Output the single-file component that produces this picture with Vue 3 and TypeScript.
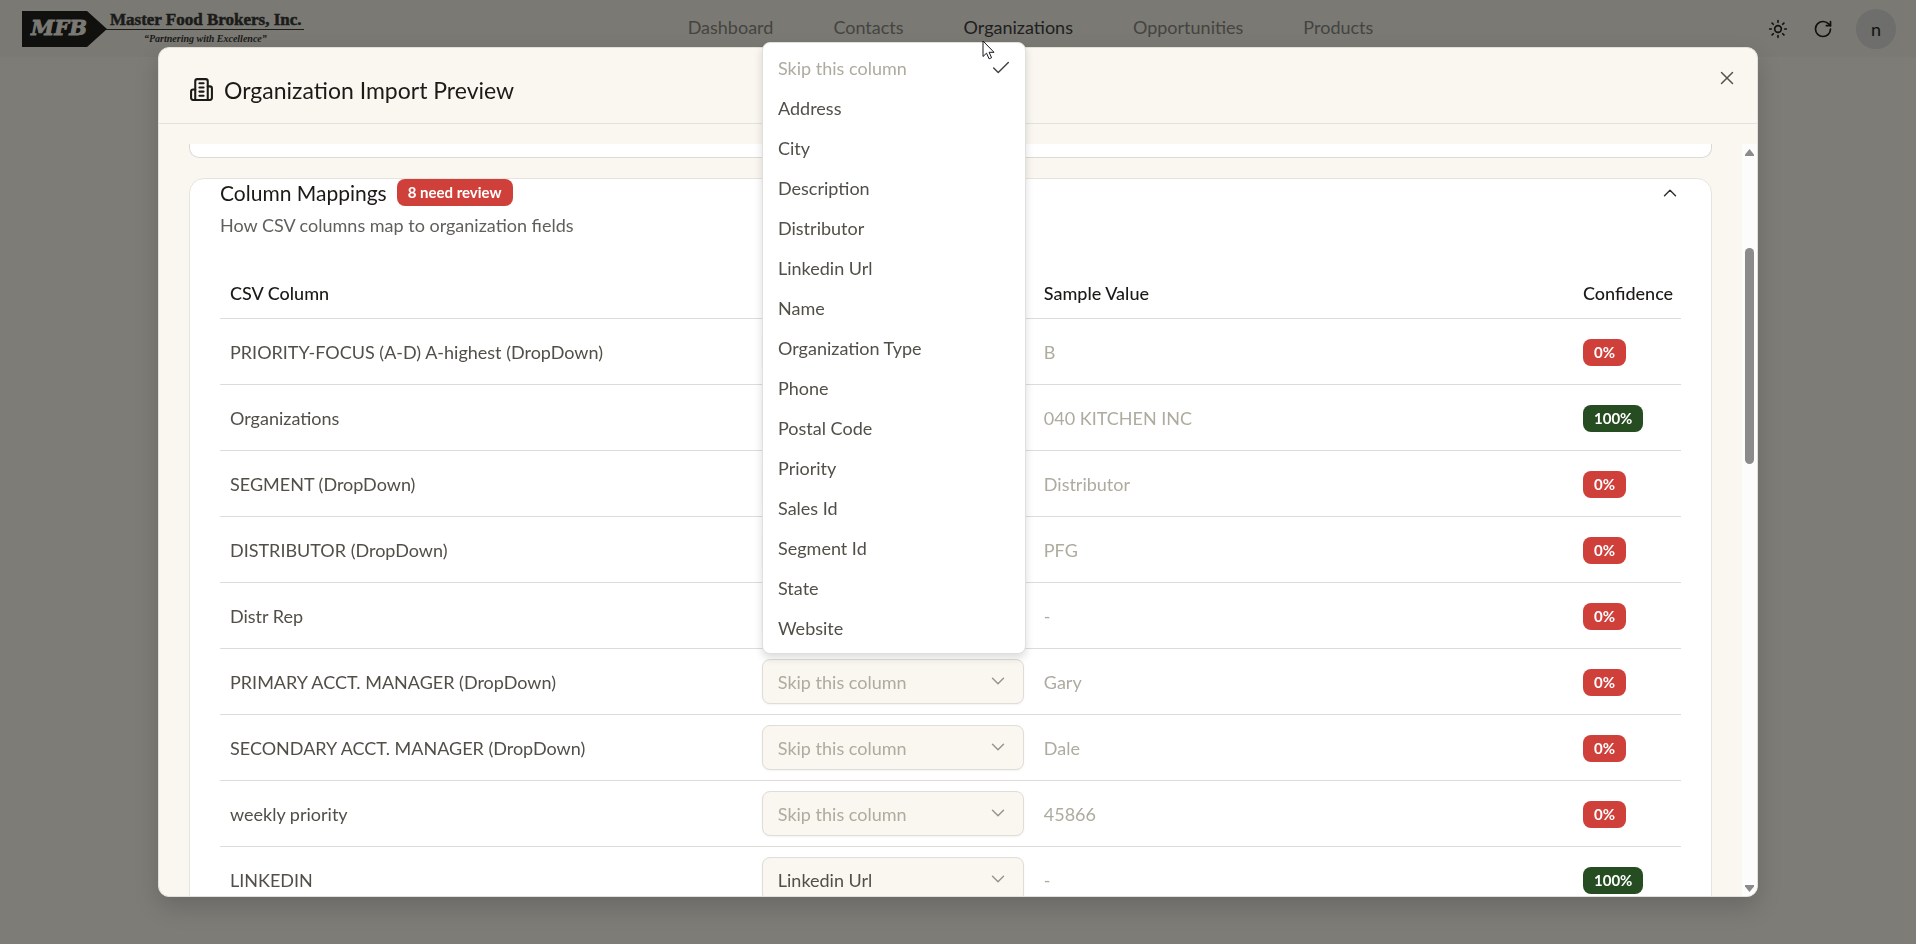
<script setup lang="ts">
import { ref } from 'vue'

interface Mapping {
  column: string
  field: string
  sample: string
  confidence: number
}

const SKIP = 'Skip this column'

const navItems = ['Dashboard', 'Contacts', 'Organizations', 'Opportunities', 'Products']

const fieldOptions = [
  SKIP, 'Address', 'City', 'Description', 'Distributor', 'Linkedin Url', 'Name', 'Organization Type',
  'Phone', 'Postal Code', 'Priority', 'Sales Id', 'Segment Id', 'State', 'Website',
]

const selected = ref(SKIP)

const mappings = ref<Mapping[]>([
  { column: 'PRIORITY-FOCUS (A-D) A-highest (DropDown)', field: SKIP, sample: 'B', confidence: 0 },
  { column: 'Organizations', field: 'Name', sample: '040 KITCHEN INC', confidence: 100 },
  { column: 'SEGMENT (DropDown)', field: SKIP, sample: 'Distributor', confidence: 0 },
  { column: 'DISTRIBUTOR (DropDown)', field: SKIP, sample: 'PFG', confidence: 0 },
  { column: 'Distr Rep', field: SKIP, sample: '-', confidence: 0 },
  { column: 'PRIMARY ACCT. MANAGER (DropDown)', field: SKIP, sample: 'Gary', confidence: 0 },
  { column: 'SECONDARY ACCT. MANAGER (DropDown)', field: SKIP, sample: 'Dale', confidence: 0 },
  { column: 'weekly priority', field: SKIP, sample: '45866', confidence: 0 },
  { column: 'LINKEDIN', field: 'Linkedin Url', sample: '-', confidence: 100 },
])
</script>

<template>
  <div class="page">
    <header class="topbar">
      <a href="#" class="brand" aria-label="Master Food Brokers, Inc.">
        <svg class="logo" viewBox="0 0 285 40" aria-hidden="true">
          <path d="M2 2h65l20 18-20 18H2Z" fill="#10100e" />
          <path d="M86 20.500H284" stroke="#1b1b19" stroke-width="1" />
          <text x="11" y="26" class="logo-mark">MFB</text>
          <text x="90" y="16" class="logo-name">Master Food Brokers, Inc.</text>
          <text x="124" y="33" class="logo-tag">“Partnering with Excellence”</text>
        </svg>
      </a>
      <nav class="nav">
        <a v-for="item in navItems" :key="item" href="#" class="nav-link" :class="{ active: item === 'Organizations' }">{{ item }}</a>
      </nav>
      <div class="tools">
        <button type="button" class="tool" aria-label="Toggle theme">
          <svg viewBox="0 0 24 24" class="icon small">
            <circle cx="12" cy="12" r="4" />
            <path d="M12 2v2M12 20v2M4.930 4.930l1.410 1.410M17.660 17.660l1.410 1.410M2 12h2M20 12h2M6.340 17.660l-1.410 1.410M19.070 4.930l-1.410 1.410" />
          </svg>
        </button>
        <button type="button" class="tool" aria-label="Refresh">
          <svg viewBox="0 0 24 24" class="icon small">
            <path d="M21 12a9 9 0 1 1-9-9c2.520 0 4.930 1 6.740 2.740L21 8" />
            <path d="M21 3v5h-5" />
          </svg>
        </button>
        <button type="button" class="avatar">n</button>
      </div>
    </header>

    <section class="dialog" role="dialog" aria-labelledby="dialog-title">
      <div class="dialog-inner">
        <div class="dialog-head">
          <svg viewBox="0 0 24 24" class="icon building">
            <path d="M6 22V4a2 2 0 0 1 2-2h8a2 2 0 0 1 2 2v18Z" />
            <path d="M6 12H4a2 2 0 0 0-2 2v6a2 2 0 0 0 2 2h2" />
            <path d="M18 9h2a2 2 0 0 1 2 2v9a2 2 0 0 1-2 2h-2" />
            <path d="M10 6h4M10 10h4M10 14h4M10 18h4" />
          </svg>
          <h1 id="dialog-title">Organization Import Preview</h1>
          <button type="button" class="close" aria-label="Close">
            <svg viewBox="0 0 24 24" class="icon"><path d="M18 6 6 18M6 6l12 12" /></svg>
          </button>
        </div>

        <div class="dialog-body">
          <div class="scroll">
            <div class="card card-tail"></div>
            <div class="card mappings">
              <div class="card-head">
                <h2>Column Mappings</h2>
                <span class="badge danger">8 need review</span>
                <button type="button" class="collapse" aria-label="Collapse column mappings">
                  <svg viewBox="0 0 24 24" class="icon"><path d="m18 15-6-6-6 6" /></svg>
                </button>
              </div>
              <p class="hint">How CSV columns map to organization fields</p>
              <table>
                <colgroup>
                  <col class="col-source" />
                  <col class="col-field" />
                  <col />
                  <col class="col-confidence" />
                </colgroup>
                <thead>
                  <tr>
                    <th scope="col">CSV Column</th>
                    <td></td>
                    <th scope="col">Sample Value</th>
                    <th scope="col">Confidence</th>
                  </tr>
                </thead>
                <tbody>
                  <tr v-for="row in mappings" :key="row.column">
                    <td>{{ row.column }}</td>
                    <td>
                      <div class="select-wrap">
                        <select v-model="row.field" :aria-label="row.column" :class="{ placeholder: row.field === SKIP }">
                          <option v-for="option in fieldOptions" :key="option">{{ option }}</option>
                        </select>
                        <svg viewBox="0 0 24 24" class="icon chevron"><path d="m6 9 6 6 6-6" /></svg>
                      </div>
                    </td>
                    <td class="sample">{{ row.sample }}</td>
                    <td>
                      <span class="badge" :class="row.confidence === 100 ? 'success' : 'danger'">{{ row.confidence }}%</span>
                    </td>
                  </tr>
                </tbody>
              </table>
            </div>
          </div>
          <div class="scrollbar" aria-hidden="true">
            <svg viewBox="0 0 9 7" class="arrow"><path d="M4.500 0 9 5.500V7H0V5.500Z" /></svg>
            <div class="track"><div class="thumb"></div></div>
            <svg viewBox="0 0 9 7" class="arrow"><path d="M4.500 7 9 1.500V0H0V1.500Z" /></svg>
          </div>
        </div>
      </div>

      <div class="menu" role="listbox" aria-label="Organization fields">
        <button
          v-for="option in fieldOptions"
          :key="option"
          type="button"
          role="option"
          class="option"
          :class="{ placeholder: option === SKIP }"
          :aria-selected="option === selected"
          @click="selected = option"
        >
          {{ option }}
          <svg v-if="option === selected" viewBox="0 0 24 24" class="icon check"><path d="M20 6 9 17l-5-5" /></svg>
        </button>
      </div>
      <svg class="cursor" viewBox="0 0 13 20" aria-hidden="true">
        <path d="M1 1v15.500l3.500-3.300 2.600 5.600 2.500-1.100-2.500-5.400h4.900Z" />
      </svg>
    </section>
  </div>
</template>

<style>
body {
  margin: 0;
}
</style>

<style scoped>
* {
  box-sizing: border-box;
}

.page {
  height: 100vh;
  overflow: hidden;
  background: #7d7c77;
  color: #514f48;
  font: 18px/26px Lato, "Open Sans", sans-serif;
}

button {
  padding: 0;
  border: 0;
  background: none;
  color: inherit;
  font: inherit;
  cursor: pointer;
}

.icon {
  display: block;
  flex: none;
  width: 22px;
  height: 22px;
  fill: none;
  stroke: currentColor;
  stroke-width: 2;
  stroke-linecap: round;
  stroke-linejoin: round;
}

.icon.small {
  width: 20px;
  height: 20px;
}

.topbar {
  display: flex;
  align-items: center;
  justify-content: space-between;
  height: 57px;
  padding: 0 20px;
  background: #7a7974;
}

.logo {
  display: block;
  width: 285px;
  height: 40px;
}

.logo text {
  font-family: "Liberation Serif", serif;
  font-weight: bold;
  fill: #1b1b19;
}

.logo .logo-mark {
  font-family: "DejaVu Serif", serif;
  font-size: 21px;
  font-style: italic;
  fill: #7a7974;
  stroke: #7a7974;
  stroke-width: 1;
}

.logo .logo-name {
  font-size: 17px;
  stroke: #1b1b19;
  stroke-width: 0.500;
}

.logo .logo-tag {
  font-size: 10px;
  font-style: italic;
}

.nav {
  display: flex;
  margin-bottom: 4px;
}

.nav-link {
  padding: 0 30px;
  color: #454440;
  text-decoration: none;
}

.nav-link.active {
  color: #20201d;
}

.tools {
  display: flex;
  align-items: center;
  color: #11110f;
}

.tool {
  display: grid;
  place-items: center;
  width: 45px;
  height: 45px;
}

.avatar {
  width: 40px;
  height: 40px;
  margin-left: 10px;
  border-radius: 50%;
  background: #6e6e6c;
}

.dialog {
  position: fixed;
  inset: 47px 0;
  width: min(1600px, 96vw);
  margin: 0 auto;
  border: 1px solid #e3e0d9;
  border-radius: 11px;
  background: #faf7f0;
  box-shadow: 0 10px 24px rgba(0, 0, 0, 0.160);
}

.dialog-inner {
  display: flex;
  flex-direction: column;
  height: 100%;
  overflow: hidden;
  border-radius: 10px;
}

.dialog-head {
  display: flex;
  flex: none;
  align-items: center;
  gap: 10px;
  height: 76px;
  margin-bottom: 20px;
  padding: 8px 19px 0 30px;
  border-bottom: 1px solid #e3e1db;
  color: #1b1a16;
}

.building {
  width: 25px;
  height: 25px;
}

h1 {
  margin: 0;
  font-size: 23px;
  font-weight: 400;
  line-height: 30px;
}

.close {
  align-self: flex-start;
  margin: 11px 0 0 auto;
  color: #54524c;
}

.close .icon,
.collapse .icon,
.chevron,
.check {
  stroke-width: 1.600;
}

.dialog-body {
  display: flex;
  flex: 1;
  min-height: 0;
}

.scroll {
  flex: 1;
  min-width: 0;
  overflow: hidden;
  padding: 0 30px;
}

.card {
  border: 1px solid #e6e4df;
  background: #fff;
}

.card-tail {
  height: 14px;
  margin-bottom: 20px;
  border-color: #dcdad5;
  border-top: 0;
  border-radius: 0 0 10px 10px;
}

.mappings {
  padding: 0 30px 30px;
  border-radius: 15px;
}

.card-head {
  display: flex;
  align-items: center;
  gap: 10px;
  height: 27px;
}

h2 {
  margin: 0;
  color: #1b1a16;
  font-size: 21px;
  font-weight: 400;
  line-height: 24px;
}

.collapse {
  margin-left: auto;
  color: #33322d;
}

.hint {
  margin: 6px 0 30px;
  color: #605f5c;
}

.badge {
  display: inline-block;
  padding: 0 11px;
  border-radius: 8px;
  color: #fff;
  font-size: 15px;
  font-weight: 700;
  line-height: 27px;
  vertical-align: middle;
}

.danger {
  background: #cf403b;
}

.success {
  background: #264d22;
}

table {
  width: 100%;
  border-collapse: separate;
  border-spacing: 0;
  table-layout: fixed;
}

.col-source {
  width: 36.400%;
}

.col-field {
  width: 282px;
}

.col-confidence {
  width: 108px;
}

th,
td {
  padding: 0 10px;
  border-bottom: 1px solid #dddcd9;
  text-align: left;
}

thead tr {
  height: 51px;
}

tbody tr {
  height: 66px;
}

th {
  color: #1b1a16;
  font-weight: 500;
}

.sample,
.placeholder {
  color: #aeab9f;
}

.select-wrap {
  position: relative;
}

select {
  display: block;
  width: 100%;
  height: 45px;
  padding: 0 40px 0 15px;
  appearance: none;
  border: 1px solid #dfddd8;
  border-radius: 8px;
  background: #faf7f0;
  box-shadow: 0 1px 2px rgba(0, 0, 0, 0.050);
  color: #514f48;
  font: inherit;
}

select.placeholder {
  color: #aeab9f;
}

.chevron {
  position: absolute;
  top: 11px;
  right: 15px;
  color: #969590;
  pointer-events: none;
}

.scrollbar {
  display: flex;
  flex-direction: column;
  align-items: center;
  width: 15px;
  padding: 5px 0 4px;
  background: #fcfcfc;
}

.arrow {
  width: 9px;
  height: 7px;
  fill: #8b8b8b;
}

.track {
  flex: 1;
  width: 9px;
  padding: 92px 0 0;
}

.thumb {
  height: 216px;
  border-radius: 5px;
  background: #8b8b8b;
}

.menu {
  position: absolute;
  top: -6px;
  left: 603px;
  width: 264px;
  padding: 5px;
  border: 1px solid #e0dfdb;
  border-radius: 8px;
  background: #fff;
  box-shadow: 0 4px 8px rgba(0, 0, 0, 0.140);
}

.option {
  display: flex;
  align-items: center;
  justify-content: space-between;
  width: 100%;
  height: 40px;
  padding: 0 8px 0 10px;
  color: #514f48;
}

.option.placeholder {
  color: #aeab9f;
}

.check {
  color: #44433e;
}

.cursor {
  position: absolute;
  top: -8px;
  left: 823px;
  width: 13px;
  height: 20px;
  fill: #fff;
  stroke: #15151f;
  stroke-width: 1;
}
</style>
